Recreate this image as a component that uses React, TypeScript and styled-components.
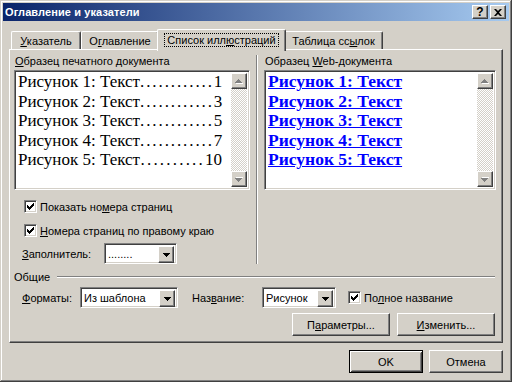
import React from 'react'
import styled, { createGlobalStyle, css } from 'styled-components'

const FACE = '#D4D0C8'
const SHADOW = '#808080'
const DARK = '#404040'

const GlobalStyle = createGlobalStyle`
  html, body {
    margin: 0;
    padding: 0;
    background: ${FACE};
  }
  body {
    font-family: 'Liberation Sans', Arial, sans-serif;
    font-size: 11px;
    color: #000;
  }
  * { box-sizing: border-box; }
`

const raised = css`
  border: 1px solid;
  border-color: #fff ${DARK} ${DARK} #fff;
  box-shadow: inset -1px -1px ${SHADOW}, inset 1px 1px ${FACE};
`

const sunken = css`
  border: 1px solid;
  border-color: ${SHADOW} #fff #fff ${SHADOW};
  box-shadow: inset 1px 1px ${DARK}, inset -1px -1px ${FACE};
`

const Window = styled.div`
  width: 512px;
  height: 382px;
  padding: 3px;
  background: ${FACE};
  display: flex;
  flex-direction: column;
  box-shadow: inset -1px -1px ${DARK}, inset 1px 1px ${FACE}, inset -2px -2px ${SHADOW}, inset 2px 2px #fff;
`

const TitleBar = styled.div`
  height: 18px;
  padding: 0 3px 0 2px;
  display: flex;
  align-items: center;
  justify-content: space-between;
  background: linear-gradient(to right, #0a246a, #a6caf0);
`

const Title = styled.span`
  color: #fff;
  font-weight: bold;
  font-size: 11px;
  letter-spacing: 0.1px;
`

const CaptionButtons = styled.div`
  display: flex;
  gap: 2px;
`

const CaptionButton = styled.div`
  width: 16px;
  height: 14px;
  background: ${FACE};
  ${raised};
  display: flex;
  align-items: center;
  justify-content: center;
  font-weight: bold;
  font-size: 12px;
  line-height: 12px;
`

const Body = styled.div`
  padding: 8px 6px 0 6px;
  display: flex;
  flex-direction: column;
`

const TabStrip = styled.div`
  height: 20px;
  padding-left: 2px;
  display: flex;
  align-items: flex-end;
`

const Tab = styled.div<{ $w: number; $active?: boolean }>`
  width: ${p => p.$w}px;
  height: ${p => (p.$active ? 22 : 18)}px;
  margin: ${p => (p.$active ? '0 -2px -2px -2px' : '0')};
  position: relative;
  z-index: ${p => (p.$active ? 2 : 1)};
  background: ${FACE};
  border-top: 1px solid #fff;
  border-left: 1px solid #fff;
  border-right: 1px solid ${DARK};
  border-radius: 2px 2px 0 0;
  box-shadow: inset -1px 0 ${SHADOW};
  display: flex;
  align-items: flex-start;
  justify-content: center;
  padding-top: ${p => (p.$active ? 3 : 2)}px;
  white-space: nowrap;
`

const TabLabel = styled.span<{ $focus?: boolean }>`
  padding: 0 2px;
  line-height: 12px;
  border: 1px dotted ${p => (p.$focus ? '#000' : 'transparent')};
`

const Panel = styled.div`
  height: 294px;
  background: ${FACE};
  ${raised};
  padding: 5px 4px 5px 4px;
  display: flex;
  flex-direction: column;
`

const Upper = styled.div`
  display: flex;
`

const Column = styled.div<{ $w: number }>`
  width: ${p => p.$w}px;
  display: flex;
  flex-direction: column;
`

const VSeparator = styled.div`
  width: 2px;
  margin: 0 6px;
  border-left: 1px solid ${SHADOW};
  border-right: 1px solid #fff;
`

const GroupLabel = styled.div`
  height: 13px;
  line-height: 13px;
  margin: 0 0 2px 1px;
  white-space: nowrap;
`

const Preview = styled.div`
  height: 120px;
  background: #fff;
  ${sunken};
  padding: 2px;
  display: flex;
`

const PreviewText = styled.div<{ $pad: number }>`
  flex: 1;
  min-width: 0;
  margin-top: -1px;
  padding: 0 ${p => p.$pad}px 0 1px;
  font-family: 'Liberation Serif', 'Times New Roman', serif;
  line-height: 19.5px;
`

const PrintLine = styled.div`
  display: flex;
  font-size: 17px;
  white-space: nowrap;
`

const Leader = styled.span<{ $spacing: number }>`
  flex: 1;
  text-align: right;
  letter-spacing: ${p => p.$spacing}px;
  white-space: nowrap;
`

const WebLine = styled.div`
  color: #0000ff;
  font-size: 17.5px;
  font-weight: bold;
  text-decoration: underline;
  white-space: nowrap;
`

const ScrollBar = styled.div`
  width: 16px;
  display: flex;
  flex-direction: column;
  flex-shrink: 0;
`

const ScrollTrack = styled.div`
  flex: 1;
  background-color: #fff;
  background-image: repeating-conic-gradient(${FACE} 0 25%, #fff 0 50%);
  background-size: 2px 2px;
`

const ArrowButton = styled.div<{ $w: number; $h: number }>`
  width: ${p => p.$w}px;
  height: ${p => p.$h}px;
  background: ${FACE};
  ${raised};
  display: flex;
  align-items: center;
  justify-content: center;
  flex-shrink: 0;
`

const CheckRow = styled.div<{ $top: number; $indent: number }>`
  height: 17px;
  margin: ${p => p.$top}px 0 0 ${p => p.$indent}px;
  display: flex;
  align-items: center;
  gap: 3px;
  white-space: nowrap;
`

const CheckBox = styled.div`
  width: 13px;
  height: 13px;
  background: #fff;
  ${sunken};
  display: flex;
  align-items: center;
  justify-content: center;
  flex-shrink: 0;
`

const FieldRow = styled.div<{ $top: number }>`
  height: 21px;
  margin-top: ${p => p.$top}px;
  display: flex;
  align-items: center;
  white-space: nowrap;
`

const FieldLabel = styled.span<{ $w: number; $indent?: number }>`
  width: ${p => p.$w}px;
  margin-left: ${p => p.$indent ?? 0}px;
  flex-shrink: 0;
`

const Combo = styled.div<{ $w: number }>`
  width: ${p => p.$w}px;
  height: 21px;
  background: #fff;
  ${sunken};
  padding: 2px;
  display: flex;
  flex-shrink: 0;
`

const ComboValue = styled.span`
  flex: 1;
  padding-left: 1px;
  line-height: 17px;
  overflow: hidden;
`

const SectionHeader = styled.div`
  height: 13px;
  margin-top: 6px;
  display: flex;
  align-items: center;
`

const HLine = styled.div`
  flex: 1;
  height: 2px;
  margin: 0 3px 0 7px;
  border-top: 1px solid ${SHADOW};
  border-bottom: 1px solid #fff;
`

const ButtonRow = styled.div<{ $top: number; $right: number; $gap: number }>`
  margin: ${p => p.$top}px ${p => p.$right}px 0 0;
  display: flex;
  justify-content: flex-end;
  gap: ${p => p.$gap}px;
`

const Button = styled.div<{ $w: number; $default?: boolean }>`
  width: ${p => p.$w}px;
  height: 23px;
  background: ${FACE};
  display: flex;
  align-items: center;
  justify-content: center;
  ${p =>
    p.$default
      ? css`
          border: 1px solid #000;
          box-shadow: inset 1px 1px #fff, inset -1px -1px ${DARK}, inset 2px 2px ${FACE}, inset -2px -2px ${SHADOW};
        `
      : raised};
`

const DownArrow = () => (
  <svg width="7" height="4" viewBox="0 0 7 4">
    <path d="M0 0h7v1h-1v1h-1v1h-1v1h-1v-1h-1v-1h-1v-1h-1z" fill="#000" />
  </svg>
)

const GrayArrow = ({ up }: { up?: boolean }) => (
  <svg width="8" height="5" viewBox="0 0 8 5" style={{ transform: up ? undefined : 'scaleY(-1)' }}>
    <path d="M4 1h1v1h1v1h1v1h1v1h-7v-1h1v-1h1v-1h1z" fill="#fff" />
    <path d="M3 0h1v1h1v1h1v1h1v1h-7v-1h1v-1h1v-1h1z" fill={SHADOW} />
  </svg>
)

const CheckMark = () => (
  <svg width="7" height="7" viewBox="0 0 7 7">
    {[2, 3, 4, 3, 2, 1, 0].map((y, x) => (
      <rect key={x} x={x} y={y} width="1" height="3" fill="#000" />
    ))}
  </svg>
)

const CloseGlyph = () => (
  <svg width="8" height="7" viewBox="0 0 8 7">
    <path d="M0 0h2l2 2 2-2h2l-3 3.5 3 3.5h-2l-2-2-2 2h-2l3-3.5z" fill="#000" />
  </svg>
)

const Scroller = () => (
  <ScrollBar>
    <ArrowButton $w={16} $h={16}>
      <GrayArrow up />
    </ArrowButton>
    <ScrollTrack />
    <ArrowButton $w={16} $h={16}>
      <GrayArrow />
    </ArrowButton>
  </ScrollBar>
)

const Check = ({ children, top, indent }: { children: React.ReactNode; top: number; indent: number }) => (
  <CheckRow $top={top} $indent={indent}>
    <CheckBox>
      <CheckMark />
    </CheckBox>
    <span>{children}</span>
  </CheckRow>
)

const ComboBox = ({ w, value }: { w: number; value: string }) => (
  <Combo $w={w}>
    <ComboValue>{value}</ComboValue>
    <ArrowButton $w={16} $h={17}>
      <DownArrow />
    </ArrowButton>
  </Combo>
)

// leader dots are spaced out the way Word draws a tab leader
const figures = [
  { title: 'Рисунок 1: Текст', dots: 12, spacing: 1.9, page: '1' },
  { title: 'Рисунок 2: Текст', dots: 12, spacing: 1.9, page: '3' },
  { title: 'Рисунок 3: Текст', dots: 12, spacing: 1.9, page: '5' },
  { title: 'Рисунок 4: Текст', dots: 12, spacing: 1.9, page: '7' },
  { title: 'Рисунок 5: Текст', dots: 10, spacing: 2.2, page: '10' },
]

export default function App() {
  return (
    <>
      <GlobalStyle />
      <Window>
        <TitleBar>
          <Title>Оглавление и указатели</Title>
          <CaptionButtons>
            <CaptionButton>?</CaptionButton>
            <CaptionButton>
              <CloseGlyph />
            </CaptionButton>
          </CaptionButtons>
        </TitleBar>

        <Body>
          <TabStrip>
            <Tab $w={70}>
              <TabLabel><u>У</u>казатель</TabLabel>
            </Tab>
            <Tab $w={78}>
              <TabLabel>О<u>г</u>лавление</TabLabel>
            </Tab>
            <Tab $w={129} $active>
              <TabLabel $focus>Список илл<u>ю</u>страций</TabLabel>
            </Tab>
            <Tab $w={99}>
              <TabLabel>Таблица сс<u>ы</u>лок</TabLabel>
            </Tab>
          </TabStrip>

          <Panel>
            <Upper>
              <Column $w={236}>
                <GroupLabel><u>О</u>бразец печатного документа</GroupLabel>
                <Preview>
                  <PreviewText $pad={9}>
                    {figures.map(f => (
                      <PrintLine key={f.title}>
                        <span>{f.title}</span>
                        <Leader $spacing={f.spacing}>{'.'.repeat(f.dots)}</Leader>
                        <span>{f.page}</span>
                      </PrintLine>
                    ))}
                  </PreviewText>
                  <Scroller />
                </Preview>
                <Check top={8} indent={10}>Показать но<u>м</u>ера страниц</Check>
                <Check top={7} indent={10}><u>Н</u>омера страниц по правому краю</Check>
                <FieldRow $top={4}>
                  <FieldLabel $w={82} $indent={8}><u>З</u>аполнитель:</FieldLabel>
                  <ComboBox w={73} value="........" />
                </FieldRow>
              </Column>
              <VSeparator />
              <Column $w={232}>
                <GroupLabel>Образец <u>W</u>eb-документа</GroupLabel>
                <Preview>
                  <PreviewText $pad={0}>
                    {figures.map(f => (
                      <WebLine key={f.title}>{f.title}</WebLine>
                    ))}
                  </PreviewText>
                  <Scroller />
                </Preview>
              </Column>
            </Upper>

            <SectionHeader>
              <span>Общие</span>
              <HLine />
            </SectionHeader>
            <FieldRow $top={4}>
              <FieldLabel $w={58} $indent={8}><u>Ф</u>орматы:</FieldLabel>
              <ComboBox w={98} value="Из шаблона" />
              <FieldLabel $w={70} $indent={14}>Наз<u>в</u>ание:</FieldLabel>
              <ComboBox w={74} value="Рисунок" />
              <CheckRow $top={0} $indent={12}>
                <CheckBox>
                  <CheckMark />
                </CheckBox>
                <span>По<u>л</u>ное название</span>
              </CheckRow>
            </FieldRow>
            <ButtonRow $top={5} $right={3} $gap={7}>
              <Button $w={98}>П<u>а</u>раметры...</Button>
              <Button $w={98}><u>И</u>зменить...</Button>
            </ButtonRow>
          </Panel>

          <ButtonRow $top={7} $right={0} $gap={6}>
            <Button $w={74} $default>OK</Button>
            <Button $w={74}>Отмена</Button>
          </ButtonRow>
        </Body>
      </Window>
    </>
  )
}
